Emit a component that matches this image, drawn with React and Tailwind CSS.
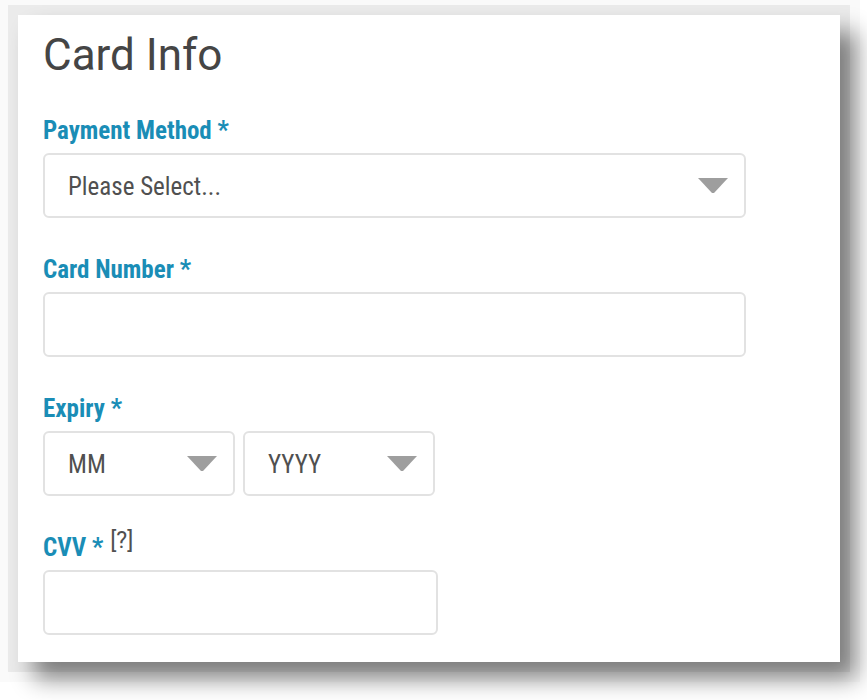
import React from "react";

const condensed = { fontFamily: "Roboto, 'Liberation Sans', sans-serif" };

function Caret() {
  return (
    <svg width="30" height="15" viewBox="0 0 30 15" className="shrink-0">
      <path d="M0 0 H30 L16 15 H14 Z" fill="#9e9e9e" />
    </svg>
  );
}

function Label({ children, extra }) {
  return (
    <div className="h-[29px] leading-[29px] text-[25px] font-bold font-stretch-condensed text-[#1a8db6] whitespace-nowrap">
      {children}
      {extra}
    </div>
  );
}

function SelectBox({ value, className }) {
  return (
    <div
      className={
        "h-[65px] flex items-center justify-between pl-[23px] pr-[16px] border-2 border-[#e2e2e2] rounded-[6px] bg-white " +
        className
      }
    >
      <span className="text-[25px] leading-[25px] mt-[1px] font-stretch-condensed text-[#505050]">{value}</span>
      <Caret />
    </div>
  );
}

function TextBox({ className }) {
  return <div className={"h-[65px] border-2 border-[#e2e2e2] rounded-[6px] bg-white " + className} />;
}

export default function App() {
  return (
    <div className="min-h-[700px] bg-white pt-[15px] pl-[18px]" style={condensed}>
      <div className="w-[822px] bg-white pt-[18px] pb-[27px] pl-[25px] shadow-[16px_17px_22px_0_rgba(0,0,0,0.47),0_0_0_10px_rgba(0,0,0,0.06),0_0_0_20px_rgba(0,0,0,0.02)]">
        <h1 className="text-[44px] leading-[44px] font-normal text-[#454545]">Card Info</h1>

        <div className="mt-[39px] flex flex-col gap-[37px]">
          <div className="flex flex-col gap-[8px]">
            <Label>Payment Method *</Label>
            <SelectBox value="Please Select..." className="w-[703px]" />
          </div>

          <div className="flex flex-col gap-[8px]">
            <Label>Card Number *</Label>
            <TextBox className="w-[703px]" />
          </div>

          <div className="flex flex-col gap-[8px]">
            <Label>Expiry *</Label>
            <div className="flex gap-[8px]">
              <SelectBox value="MM" className="w-[192px]" />
              <SelectBox value="YYYY" className="w-[192px]" />
            </div>
          </div>

          <div className="flex flex-col gap-[8px]">
            <Label
              extra={
                <sup className="ml-[7px] text-[23px] font-normal font-stretch-normal text-[#505050] top-[-8px]">
                  [?]
                </sup>
              }
            >
              CVV *
            </Label>
            <TextBox className="w-[395px]" />
          </div>
        </div>
      </div>
    </div>
  );
}
